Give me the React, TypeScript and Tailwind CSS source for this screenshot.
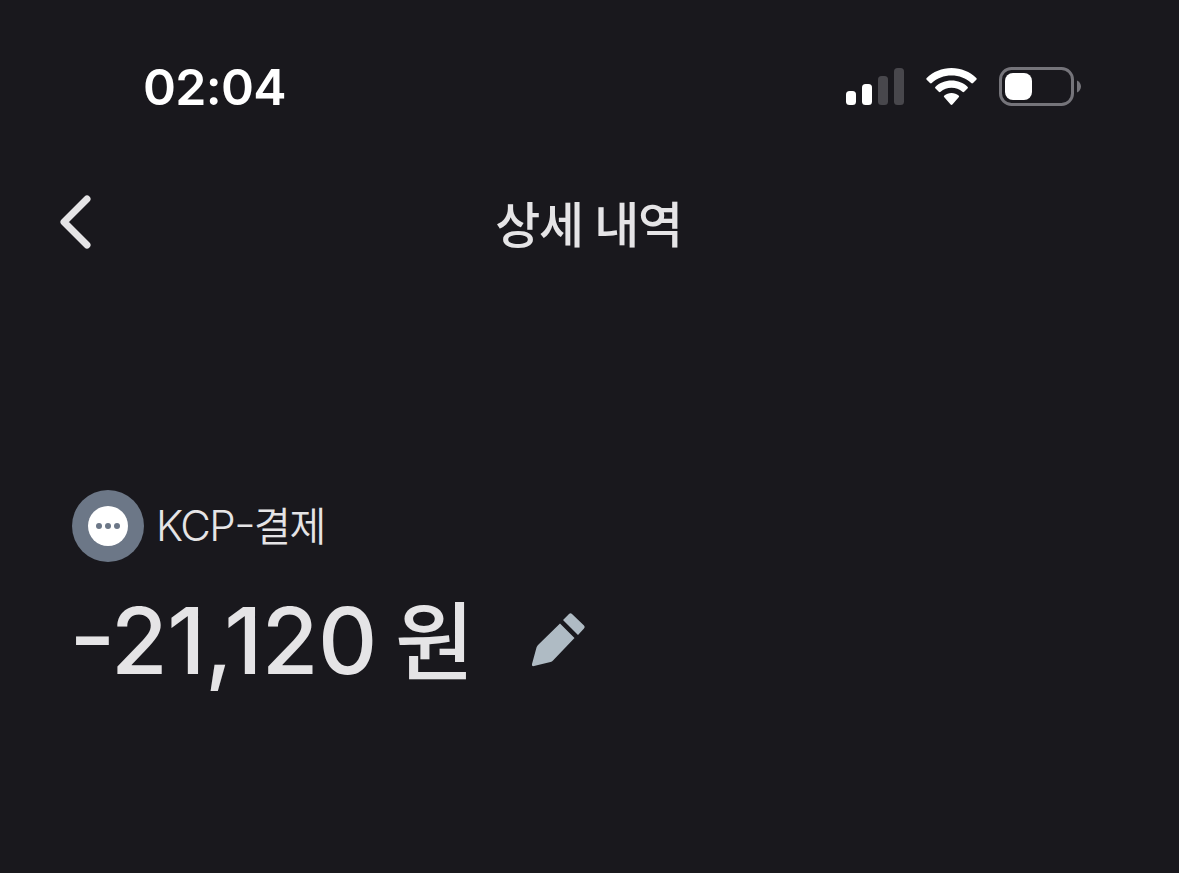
function StatusBar() {
  return (
    <div className="flex h-[173px] items-center justify-between pl-[143px] pr-[97px]">
      <span className="text-[50px] leading-none font-semibold tracking-[-0.7px] text-white">
        02:04
      </span>
      <div className="flex items-center">
        {/* Signal */}
        <svg width="58" height="38" viewBox="0 0 58 38" fill="#fff">
          <rect x="0" y="23" width="10" height="14" rx="3.5" />
          <rect x="16" y="16" width="10" height="21" rx="3.5" />
          <rect x="32" y="8" width="10" height="29" rx="3.5" fill="#48474c" />
          <rect x="48" y="0" width="10" height="37" rx="3.5" fill="#48474c" />
        </svg>
        {/* Wifi */}
        <svg className="ml-[22px]" width="51" height="38" viewBox="0 0 51 38" fill="#fff">
          <path d="M25.5 0C35 0 44 3.700 50.300 10C50.900 10.600 50.900 11.200 50.300 11.800L47 15C46.400 15.600 45.800 15.600 45.200 15C40 10.200 33 7.600 25.500 7.600S11 10.200 5.800 15C5.200 15.600 4.600 15.600 4 15L.7 11.800C.1 11.200 .1 10.600 .7 10C7 3.700 16 0 25.500 0Z" />
          <path d="M25.500 12.500C31.800 12.500 37.300 14.800 41.500 18.700C42.100 19.300 42.100 19.900 41.500 20.500L38.200 23.700C37.600 24.300 37 24.300 36.400 23.700C33.400 21.200 29.700 19.800 25.500 19.800S17.600 21.200 14.600 23.700C14 24.300 13.400 24.300 12.800 23.700L9.500 20.500C8.900 19.900 8.900 19.300 9.500 18.700C13.700 14.800 19.200 12.500 25.500 12.500Z" />
          <path d="M25.500 25C28.300 25 30.700 26 32.600 27.500C33.300 28.100 33.300 28.700 32.700 29.300L26.400 36.500C25.800 37.100 25.200 37.100 24.600 36.500L18.300 29.300C17.700 28.700 17.700 28.100 18.400 27.500C20.300 26 22.700 25 25.500 25Z" />
        </svg>
        {/* Battery */}
        <svg className="ml-[22px]" width="83" height="39" viewBox="0 0 83 39">
          <rect x="1.500" y="1.500" width="72" height="36" rx="11" fill="none" stroke="#75747a" strokeWidth="3" />
          <rect x="6" y="6" width="27" height="27" rx="8" fill="#fff" />
          <path d="M78 13.500C80.500 14.500 82 17 82 19.500S80.500 24.500 78 25.500Z" fill="#75747a" />
        </svg>
      </div>
    </div>
  );
}

function Header() {
  return (
    <div className="grid h-[98px] grid-cols-[1fr_auto_1fr] items-center pl-[59px] pr-[61px]">
      <button type="button" aria-label="Back" className="ml-px justify-self-start">
        <svg width="32" height="54" viewBox="0 0 32 54" fill="none">
          <path d="M27 4L4 27L27 50" stroke="#e5e4e6" strokeWidth="7" strokeLinecap="round" strokeLinejoin="round" />
        </svg>
      </button>
      <h1 className="pt-[7px] text-[49px] leading-none font-medium tracking-[-1.400px]">상세 내역</h1>
    </div>
  );
}

function Summary() {
  return (
    <div className="mt-[219px] pl-[72px]">
      <div className="flex items-center gap-3">
        <svg width="72" height="72" viewBox="0 0 72 72">
          <circle cx="36" cy="36" r="36" fill="#6c7787" />
          <circle cx="36" cy="36" r="20" fill="#fff" />
          <g fill="#6c7787">
            <circle cx="27" cy="36" r="3" />
            <circle cx="36" cy="36" r="3" />
            <circle cx="45" cy="36" r="3" />
          </g>
        </svg>
        <div className="flex items-baseline text-[42px] leading-none">
          <span className="font-[350] tracking-[-1.600px]">KCP</span>
          <span className="inline-block w-[20px] origin-left scale-x-115 font-[350] tracking-[-4px] [font-feature-settings:'case']">-</span>
          <span className="text-[40px] font-[350] tracking-[-1.200px]">결제</span>
        </div>
      </div>
      <div className="mt-[32px] flex items-center">
        <div className="flex h-[92px] w-[397px] items-baseline text-[92px] leading-none font-medium whitespace-nowrap">
          <span className="-ml-[3px] inline-block w-[42px] shrink-0 origin-left scale-x-110 tracking-[-8px] [font-feature-settings:'case']">-</span>
          <span className="shrink-0 pt-px tracking-[-0.500px]">21,120</span>
          <span className="ml-[18px] shrink-0 text-[86px]">원</span>
        </div>
        <button type="button" aria-label="Edit" className="ml-[62px]">
          <svg width="56" height="56" viewBox="0 0 56 56" fill="#afbbc4">
            <path d="M29 11.500L43.500 26L22 48.500Q21 49.500 19.500 50L3 54Q.3 54.700 1 52L5.500 35.500Q6 34 7 33Z" />
            <path d="M32 8L38 2Q39.500 .5 41 2L53 13.500Q54.500 15 53 16.500L47 23Z" />
          </svg>
        </button>
      </div>
    </div>
  );
}

export default function App() {
  return (
    <div className="h-screen overflow-hidden bg-[#19181d] font-['Inter','Noto_Sans_CJK_KR',sans-serif] text-[#e5e4e6]">
      <StatusBar />
      <Header />
      <Summary />
    </div>
  );
}
